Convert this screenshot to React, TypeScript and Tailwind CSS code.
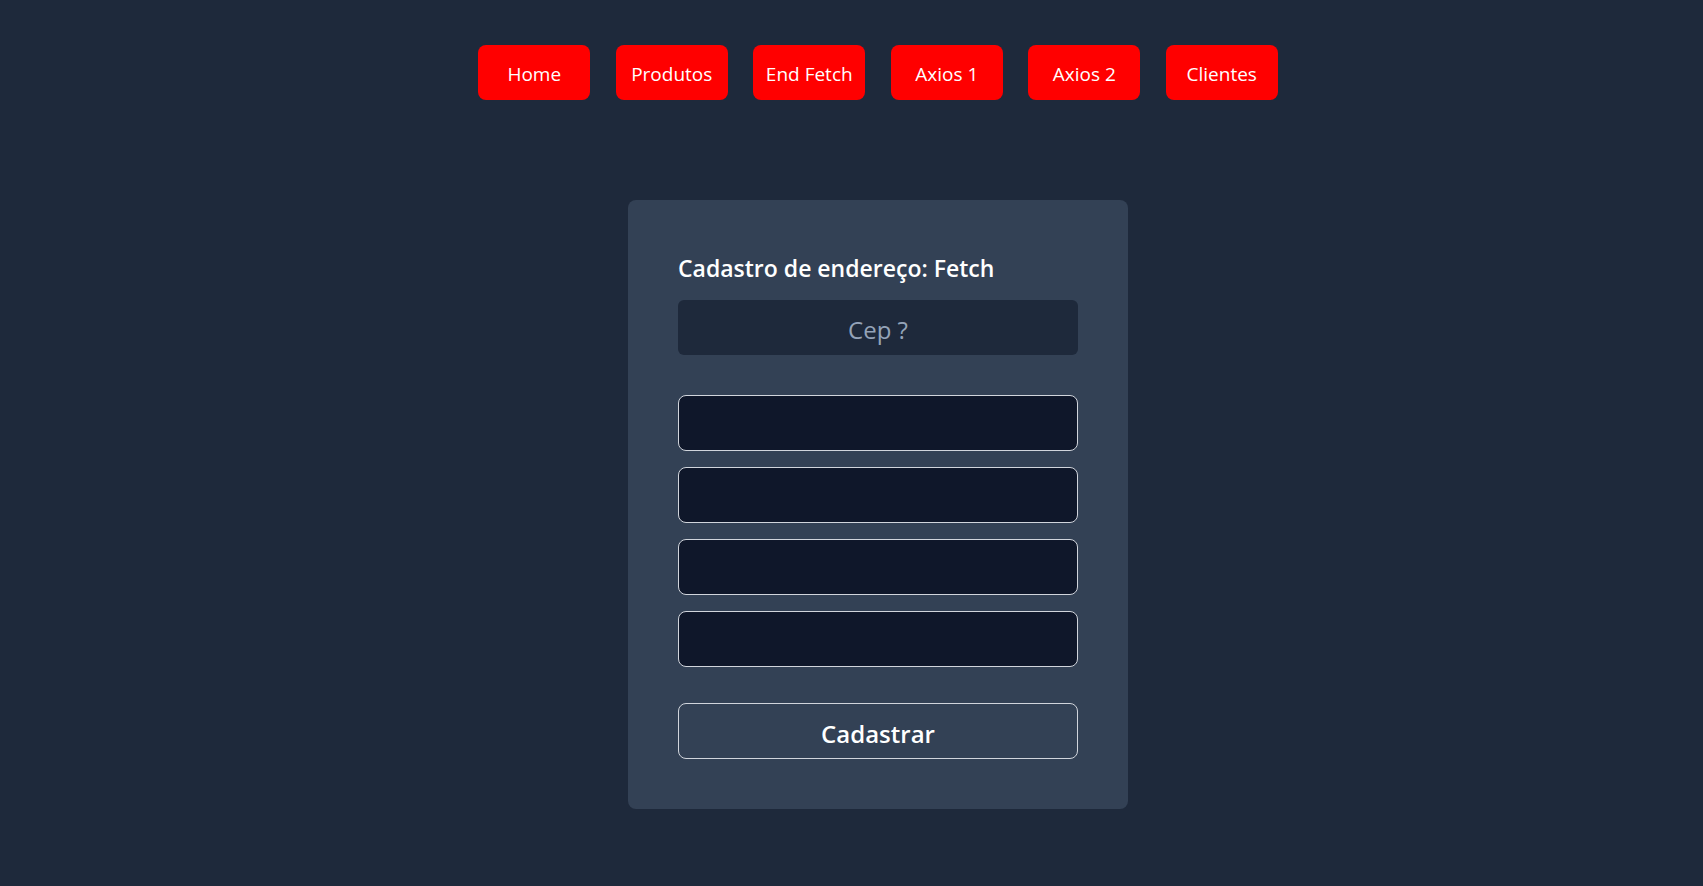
import { useState } from "react"

const links = ["Home", "Produtos", "End Fetch", "Axios 1", "Axios 2", "Clientes"]

const EndFetch = () => {
  const [cep, setCep] = useState("")

  return (
    <div className="min-h-screen bg-[#1e293b] pl-[53px] pt-[45px] font-['Open_Sans',sans-serif]">
      <nav className="flex justify-center gap-[25.5px]">
        {links.map((l) => (
          <button
            key={l}
            className="h-[55px] w-[112px] rounded-lg bg-[#ff0000] pt-[3px] text-[19px] text-white"
          >
            {l}
          </button>
        ))}
      </nav>

      <div className="flex justify-center mt-[100px]">
        <div className="flex w-[500px] flex-col rounded-lg bg-[#334155] px-[50px] pt-[52px] pb-[50px]">
          <h2 className="text-[23px] font-semibold leading-8 text-white">Cadastro de endereço: Fetch</h2>
          <input
            className="mt-[16px] h-[55px] w-full rounded-md bg-[#1e293b] pt-[3px] text-center text-[24px] font-medium text-white placeholder:text-[#94a3b8] outline-none"
            placeholder="Cep ?"
            value={cep}
            onChange={(e) => setCep(e.target.value)}
          />
          <div className="mt-[40px] flex flex-col gap-4">
            <input className="h-[56px] w-full rounded-lg border border-gray-300 bg-[#0f172a] text-white" />
            <input className="h-[56px] w-full rounded-lg border border-gray-300 bg-[#0f172a] text-white" />
            <input className="h-[56px] w-full rounded-lg border border-gray-300 bg-[#0f172a] text-white" />
            <input className="h-[56px] w-full rounded-lg border border-gray-300 bg-[#0f172a] text-white" />
          </div>
          <button className="mt-[36px] h-[56px] w-full rounded-lg border border-gray-300 bg-[#334155] pt-[5px] text-[24px] font-semibold text-white">
            Cadastrar
          </button>
        </div>
      </div>
    </div>
  )
}

export default function App() {
  return <EndFetch />
}
